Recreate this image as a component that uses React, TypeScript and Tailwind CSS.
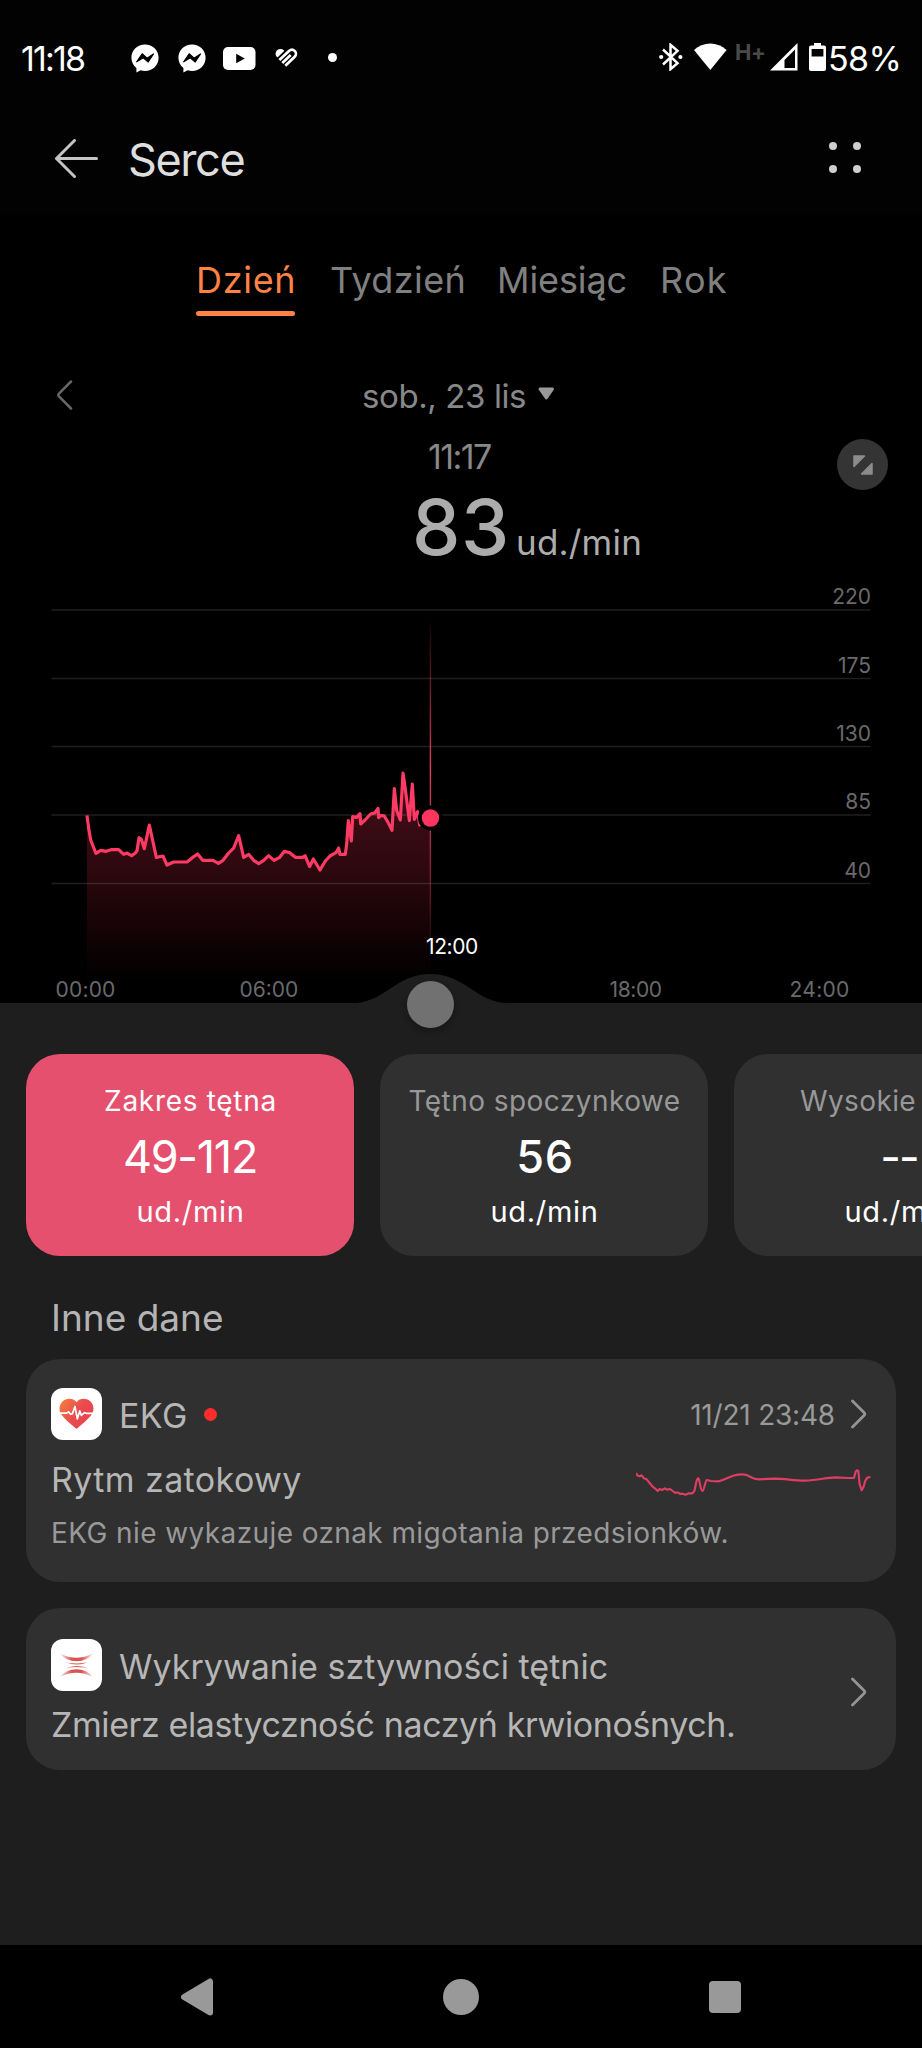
import type { ReactNode } from "react";

function Messenger({ className }: { className: string }) {
  return (
    <svg className={className} width="28" height="29" viewBox="0 0 28 29" fill="none">
      <path d="M14 .5C6.3.5.4 6.200.4 13.700c0 4.200 1.900 7.900 5 10.300v4.600l4.300-2.300c1.400.4 2.800.6 4.300.6 7.700 0 13.600-5.700 13.600-13.200S21.700.5 14 .5Z" fill="#fff" />
      <path d="m5.700 17.800 5.500-8 4.800 4.400 6.500-4.200-5.300 8-4.900-4.200z" fill="#000" stroke="#000" strokeWidth="1.200" strokeLinejoin="round" />
    </svg>
  );
}

function StatusBar() {
  return (
    <div className="flex h-[117px] items-center text-[34px] text-white">
      <span className="ml-[21px] w-[110px] tracking-[-1.8px]">11:18</span>
      <Messenger className="mr-[19px]" />
      <Messenger className="mr-[17px]" />
      <svg className="mr-[19px]" width="33" height="23" viewBox="0 0 33 23">
        <rect width="32.500" height="23" rx="5" fill="#fff" />
        <path d="M13.200 6.800v9.400l8.600-4.700z" fill="#000" />
      </svg>
      <svg className="mb-[2px]" width="23" height="19" viewBox="0 0 23 19" fill="none" stroke="#fff" strokeLinejoin="round">
        <path d="M1.800 7.600C.7 5.300 1.800 2.900 4 2c1.600-.6 3.200-.2 4.300.8L2.700 8.300z" fill="#fff" strokeWidth="1.600" />
        <path d="M4.400 12 14 3c1.700-1.500 4.100-1.600 5.700-.1 1.700 1.700 1.600 4.200 0 5.800L10.300 17.700M7.300 14.900 15.700 7" strokeWidth="2.700" />
      </svg>
      <span className="mb-[3px] ml-[30px] size-[9px] rounded-full bg-white" />

      <svg className="mb-[3px] ml-auto" width="24" height="28" viewBox="0 0 24 28" fill="none" stroke="#fff" strokeWidth="2.500">
        <path d="m4 6.500 14.500 13.700-7 6V1.800l7 6L4 21.500" />
        <circle cx="2.200" cy="14" r="2.100" fill="#fff" stroke="none" />
        <circle cx="21.400" cy="14" r="2.100" fill="#fff" stroke="none" />
      </svg>
      <svg className="mb-[4px] ml-[11px]" width="33" height="28" viewBox="0 0 33 28">
        <path d="M0 7C4.600 2.600 10.200.4 16.300.4S28 2.600 32.600 7L16.300 27z" fill="#fff" />
      </svg>
      <span className="mb-[13px] ml-[8px] w-[35px] text-[22px] font-bold tracking-[-0.5px] text-[#4a4a4a]">H+</span>
      <svg className="mb-[3px]" width="28" height="28" viewBox="0 0 28 28">
        <path d="M0 27.500 27.500 0v27.500zM14.500 25H25V6.500L14.500 17z" fill="#fff" fillRule="evenodd" />
      </svg>
      <svg className="mb-[3px] ml-[11px]" width="17" height="28" viewBox="0 0 17 28">
        <path d="M5 0h7v2.500h3A2 2 0 0 1 17 4.500V26a2 2 0 0 1-2 2H2a2 2 0 0 1-2-2V4.500a2 2 0 0 1 2-2h3zM2.600 6v7.500h11.800V6z" fill="#fff" fillRule="evenodd" />
      </svg>
      <span className="ml-[2px] mr-[20px] w-[74px] tracking-[-0.600px]">58%</span>
    </div>
  );
}

function Header() {
  return (
    <div className="flex h-[85px] items-center text-[#dedede]">
      <svg className="ml-[54px]" width="46" height="42" viewBox="0 0 46 42" fill="none" stroke="#c4c4c4" strokeWidth="3" strokeLinecap="round" strokeLinejoin="round">
        <path d="M42.500 19.500H2.500M20.500 1.500l-18 18 18 18" />
      </svg>
      <h1 className="ml-[28px] text-[45px] font-normal leading-none tracking-[-1.400px]">Serce</h1>
      <div className="mb-[4px] ml-auto mr-[61px] grid grid-cols-2 gap-x-[16.500px] gap-y-[15.500px]">
        {[0, 1, 2, 3].map((i) => (
          <span key={i} className="size-[8px] rounded-full bg-[#cfcfcf]" />
        ))}
      </div>
    </div>
  );
}

function Tabs() {
  return (
    <div className="flex h-[100px] pl-[196px] text-[36px] leading-[68px] text-[#808080]">
      <div className="w-[134px] tracking-[0.700px] text-[#ff8345]">
        Dzień
        <div className="mt-[-3px] h-[5px] w-[99px] rounded-full bg-[#ff8345]" />
      </div>
      <div className="w-[167px] tracking-[0.400px]">Tydzień</div>
      <div className="w-[163px] tracking-[-0.100px]">Miesiąc</div>
      <div className="tracking-[1.300px]">Rok</div>
    </div>
  );
}

const gridLines = [
  { y: 40, label: "220" },
  { y: 108.5, label: "175" },
  { y: 176.500, label: "130" },
  { y: 245, label: "85" },
  { y: 313.500, label: "40" },
];

const pulse =
  "171,736 176,775 182,810 198,850 212,841 228,844 243,839 266,839 281,853 290,849 305,857 316,849 321,842 327,803 334,808 343,836 358,765 379,862 399,858 411,885 431,876 471,876 487,863 503,852 518,871 549,871 565,880 579,871 596,849 611,834 626,797 641,862 656,853 671,871 686,881 701,871 716,857 732,871 748,863 763,844 779,848 796,862 819,862 825,857 839,890 850,867 870,900 886,873 900,858 918,848 926,834 930,853 946,853 950,822 955,752 964,813 968,740 980,742 990,731 992,762 1005,750 1022,732 1034,729 1044,715 1046,743 1053,736 1063,738 1074,757 1086,781 1093,656 1100,722 1111,750 1119,609 1125,650 1138,752 1147,642 1153,748 1163,725 1169,765 1180,745";

function Chart() {
  return (
    <svg className="relative z-10 block overflow-visible text-[21px]" width="922" height="433" viewBox="0 0 922 433">
      <defs>
        <linearGradient id="area" gradientUnits="userSpaceOnUse" x1="0" y1="540" x2="0" y2="1236">
          <stop offset="0" stopColor="#ff3560" stopOpacity="0.300" />
          <stop offset="0.500" stopColor="#ff3050" stopOpacity="0.180" />
          <stop offset="1" stopColor="#ff2040" stopOpacity="0" />
        </linearGradient>
        <linearGradient id="cursor" gradientUnits="userSpaceOnUse" x1="0" y1="45" x2="0" y2="385">
          <stop offset="0" stopColor="#ff4068" stopOpacity="0" />
          <stop offset="0.450" stopColor="#ff4068" stopOpacity="0.900" />
          <stop offset="0.650" stopColor="#e04068" stopOpacity="0.700" />
          <stop offset="1" stopColor="#ff4068" stopOpacity="0" />
        </linearGradient>
        <filter id="soft" x="-50%" y="-50%" width="200%" height="200%">
          <feGaussianBlur stdDeviation="4" />
        </filter>
      </defs>
      <g transform="translate(30 0) scale(.333333)">
        <polygon points={`${pulse} 1201,745 1201,1240 171,1240`} fill="url(#area)" />
      </g>
      {gridLines.map((g) => (
        <g key={g.label}>
          <path d={`M51.500 ${g.y}H870.500`} stroke="#fff" strokeOpacity="0.120" strokeWidth="1.300" />
          <text x="871" y={g.y - 6} textAnchor="end" fill="#6a6a6a">{g.label}</text>
        </g>
      ))}
      <g transform="translate(30 0) scale(.333333)">
        <polyline points={pulse} fill="none" stroke="#ff3a64" strokeWidth="9.500" strokeLinejoin="round" />
      </g>
      <path d="M429.700 45h1.400v340h-1.400z" fill="url(#cursor)" />
      <circle cx="430.500" cy="248" r="12.500" fill="#000" />
      <circle cx="430.500" cy="248" r="8.700" fill="#ff355f" />
      <g fill="#6a6a6a">
        <text x="55.500" y="426.500" letterSpacing="0.200">00:00</text>
        <text x="239.500" y="426.500">06:00</text>
        <text x="609.500" y="426.500" letterSpacing="-0.400">18:00</text>
        <text x="789.500" y="426.500" letterSpacing="0.300">24:00</text>
      </g>
      <text x="426" y="384" letterSpacing="-0.400" fill="#fff">12:00</text>
      <path d="M350 433.500C385 433.500 395 404 430.500 404S476 433.500 511 433.500z" fill="#1e1e1e" />
      <circle cx="430.500" cy="438" r="23.500" fill="#000" fillOpacity="0.300" filter="url(#soft)" />
      <circle cx="430.500" cy="434.500" r="23.500" fill="#717171" />
    </svg>
  );
}

function Stat({ active, title, titleClass, value, valueClass }: { active?: boolean; title: string; titleClass: string; value: string; valueClass: string }) {
  return (
    <div className={`flex h-[202px] w-[328px] shrink-0 flex-col items-center overflow-hidden whitespace-nowrap rounded-[34px] text-white ${active ? "bg-[#e5506e]" : "bg-[#303030]"}`}>
      <div className={`mt-[27px] text-[28px] leading-[40px] ${active ? "text-white" : "text-[#989898]"} ${titleClass}`}>{title}</div>
      <div className={`mt-[9px] text-[45px] leading-[54px] ${valueClass}`}>{value}</div>
      <div className="mt-[6px] pl-[1px] text-[29px] leading-[44px] tracking-[0.700px]">ud./min</div>
    </div>
  );
}

function Chevron({ className }: { className?: string }) {
  return (
    <svg className={className} width="16" height="30" viewBox="0 0 16 30" fill="none" stroke="#949494" strokeWidth="2.800" strokeLinecap="round" strokeLinejoin="round">
      <path d="m1.500 2 11.500 11.500q1.500 1.500 0 3L1.500 28" />
    </svg>
  );
}

function AppIcon({ children }: { children: ReactNode }) {
  return <div className="h-[52px] w-[51px] shrink-0 rounded-[12px] bg-white">{children}</div>;
}

function EcgCard() {
  return (
    <div className="flex h-[223px] flex-col rounded-[34px] bg-[#303030] pl-[25px] pr-[25px] pt-[29px]">
      <div className="flex h-[52px] items-center">
        <AppIcon>
          <svg width="51" height="52" viewBox="0 0 51 52" fill="none">
            <defs>
              <linearGradient id="heart" x1="0" y1="0" x2="1" y2="0.600">
                <stop offset="0" stopColor="#f5813c" />
                <stop offset="0.600" stopColor="#ea4a4f" />
                <stop offset="1" stopColor="#e8434f" />
              </linearGradient>
            </defs>
            <path d="M25.500 14.200C22.500 10 15.500 9.600 11.500 13.400c-4 4-3.700 9.800-.6 13.800C14.500 31.800 20.800 36.800 24.300 40c.8.700 1.600.7 2.400 0 3.500-3.200 9.800-8.200 13.400-12.800 3.100-4 3.400-9.800-.6-13.800-4-3.800-11-3.400-14 .8Z" fill="url(#heart)" />
            <path d="M8 25.200h7.500l2-1.300 2.200 2.400 1.600-.4 2.700-7.400 2.300 12.400 2.400-8 1.700 4.500 3-2.700 2.200.7H43" stroke="#fff" strokeWidth="1.700" strokeLinejoin="round" />
          </svg>
        </AppIcon>
        <span className="ml-[17px] pt-[3px] text-[34px] leading-none tracking-[0.400px] text-[#b6b6b6]">EKG</span>
        <span className="ml-[16px] size-[13px] rounded-full bg-[#ff2c2c]" />
        <span className="ml-auto pt-[2px] text-[28px] leading-none tracking-[-0.200px] text-[#999]">11/21 23:48</span>
        <Chevron className="ml-[16px] mr-[4px]" />
      </div>
      <div className="flex h-[80px] items-center justify-between">
        <span className="text-[34px] leading-none tracking-[0.400px] text-[#b6b6b6]">Rytm zatokowy</span>
        <svg className="mt-[5px]" width="235" height="30" viewBox="525 355 705 90" fill="none" stroke="#de3d64" strokeWidth="6.500" strokeLinejoin="round">
          <path d="M525 370 530 378 536 380 542 377 549 386 557 389 566 400 575 411 584 418 590 424 596 418 603 421 611 416 619 420 627 418 635 424 643 430 650 428 658 433 665 432 674 435 684 431 694 431 700 424C704 410 706 388 711 386 716 384 718 424 724 424 730 424 732 392 738 391L750 394 772 395C795 390 808 378 830 375 842 374 848 373 856 376 870 381 876 389 892 389L940 387C975 387 995 393 1032 393 1068 392 1096 384 1122 383L1160 385 1179 385 1184 366 1188 362 1192 364 1196 404 1202 422 1207 413 1213 393 1219 384 1228 382" />
        </svg>
      </div>
      <div className="h-[26px] whitespace-nowrap text-[28px] leading-[26px] tracking-[0.400px] text-[#999]">EKG nie wykazuje oznak migotania przedsionków.</div>
    </div>
  );
}

function ArteryCard() {
  return (
    <div className="mt-[26px] flex h-[162px] rounded-[34px] bg-[#303030] pl-[25px] pt-[31px] text-[34px] text-[#b6b6b6]">
      <div className="flex-1">
        <div className="flex h-[52px] items-center">
          <AppIcon>
            <svg width="51" height="52" viewBox="0 0 51 52" fill="none">
              <defs>
                <linearGradient id="fade">
                  <stop offset="0" stopColor="#d9534f" stopOpacity="0.100" />
                  <stop offset="0.350" stopColor="#d9534f" />
                  <stop offset="0.650" stopColor="#d9534f" />
                  <stop offset="1" stopColor="#d9534f" stopOpacity="0.100" />
                </linearGradient>
              </defs>
              <path d="M9 14.500q16 8.500 33 0-6 7.800-16.500 7.800T9 14.500ZM9 38q16-8.500 33 0-6-7.800-16.500-7.800T9 38Z" fill="url(#fade)" />
              <path d="M13 22.700q12 3.600 26 0-6 2.700-13 2.700t-13-2.700ZM13 29.700q12-3.600 26 0-6-2.700-13-2.700t-13 2.700Z" fill="url(#fade)" />
            </svg>
          </AppIcon>
          <span className="ml-[17px] pt-[3px] leading-none">Wykrywanie sztywności tętnic</span>
        </div>
        <div className="whitespace-nowrap leading-[67px] tracking-[-0.400px]">Zmierz elastyczność naczyń krwionośnych.</div>
      </div>
      <Chevron className="mr-[29px] mt-[38px]" />
    </div>
  );
}

function NavBar() {
  return (
    <div className="flex h-[103px] items-center bg-black pl-[180px]">
      <svg width="34" height="38" viewBox="0 0 34 38">
        <path d="M30 3.500v31L4 19z" fill="#999" stroke="#999" strokeWidth="6" strokeLinejoin="round" />
      </svg>
      <span className="ml-[229px] size-[36px] rounded-full bg-[#999]" />
      <span className="ml-[230px] size-[32px] rounded-[4px] bg-[#999]" />
    </div>
  );
}

export default function App() {
  return (
    <div className="flex h-[2048px] w-[922px] flex-col overflow-hidden bg-black font-['Inter',sans-serif] text-white">
      <div className="h-[215px] bg-[#020202]">
        <StatusBar />
        <Header />
      </div>

      <div className="h-[31px]" />
      <Tabs />

      <div className="mt-[17px] flex h-[64px] items-center text-[#888]">
        <svg className="ml-[56px]" width="17" height="30" viewBox="0 0 17 30" fill="none" stroke="#666" strokeWidth="2.500" strokeLinecap="round" strokeLinejoin="round">
          <path d="M15 1.500 3.200 13.300q-1.700 1.700 0 3.400L15 28.500" />
        </svg>
        <span className="ml-[289px] w-[175px] whitespace-nowrap pt-[2px] text-[33px] leading-none tracking-[-0.400px]">sob., 23 lis</span>
        <svg className="mb-[3px]" width="19" height="14" viewBox="0 0 19 14">
          <path d="M3 2h12.500L9.300 11z" fill="#999" stroke="#999" strokeWidth="3" strokeLinejoin="round" />
        </svg>
      </div>

      <div className="flex h-[143px]">
        <div className="w-[837px]">
          <div className="pl-[428px] pt-[10px] text-[34px] leading-[40px] tracking-[-1.600px] text-[#888]">11:17</div>
          <div className="flex items-baseline pl-[412px] text-[#acacac]">
            <span className="w-[104px] text-[77px] font-medium leading-[100px] tracking-[0.500px]">83</span>
            <span className="text-[35px] tracking-[0.200px]">ud./min</span>
          </div>
        </div>
        <div className="mt-[12px] flex size-[51px] items-center justify-center rounded-full bg-[#343434]">
          <svg width="20" height="20" viewBox="0 0 20 20" fill="#8c8c8c" stroke="#8c8c8c" strokeWidth="1.500" strokeLinejoin="round">
            <path d="M1 1h10.500L1 11.500zM19 19H8.500L19 8.500z" />
          </svg>
        </div>
      </div>

      <Chart />

      <div className="flex-1 bg-[#1e1e1e] pt-[51px]">
        <div className="flex gap-[26px] overflow-hidden pl-[26px]">
          <Stat active title="Zakres tętna" titleClass="pl-px tracking-[0.700px]" value="49-112" valueClass="tracking-[-1.260px]" />
          <Stat title="Tętno spoczynkowe" titleClass="pl-px tracking-[0.450px]" value="56" valueClass="pl-[2px] tracking-[0.600px] font-medium" />
          <Stat title="Wysokie" titleClass="mr-[80px] tracking-[0.400px]" value="--" valueClass="pl-[2px] tracking-[-2px]" />
        </div>
        <h2 className="mt-[37px] pl-[51px] text-[37px] font-normal leading-[50px] text-[#b4b4b4]">Inne dane</h2>
        <div className="mt-[16px] px-[26px]">
          <EcgCard />
          <ArteryCard />
        </div>
      </div>

      <NavBar />
    </div>
  );
}
